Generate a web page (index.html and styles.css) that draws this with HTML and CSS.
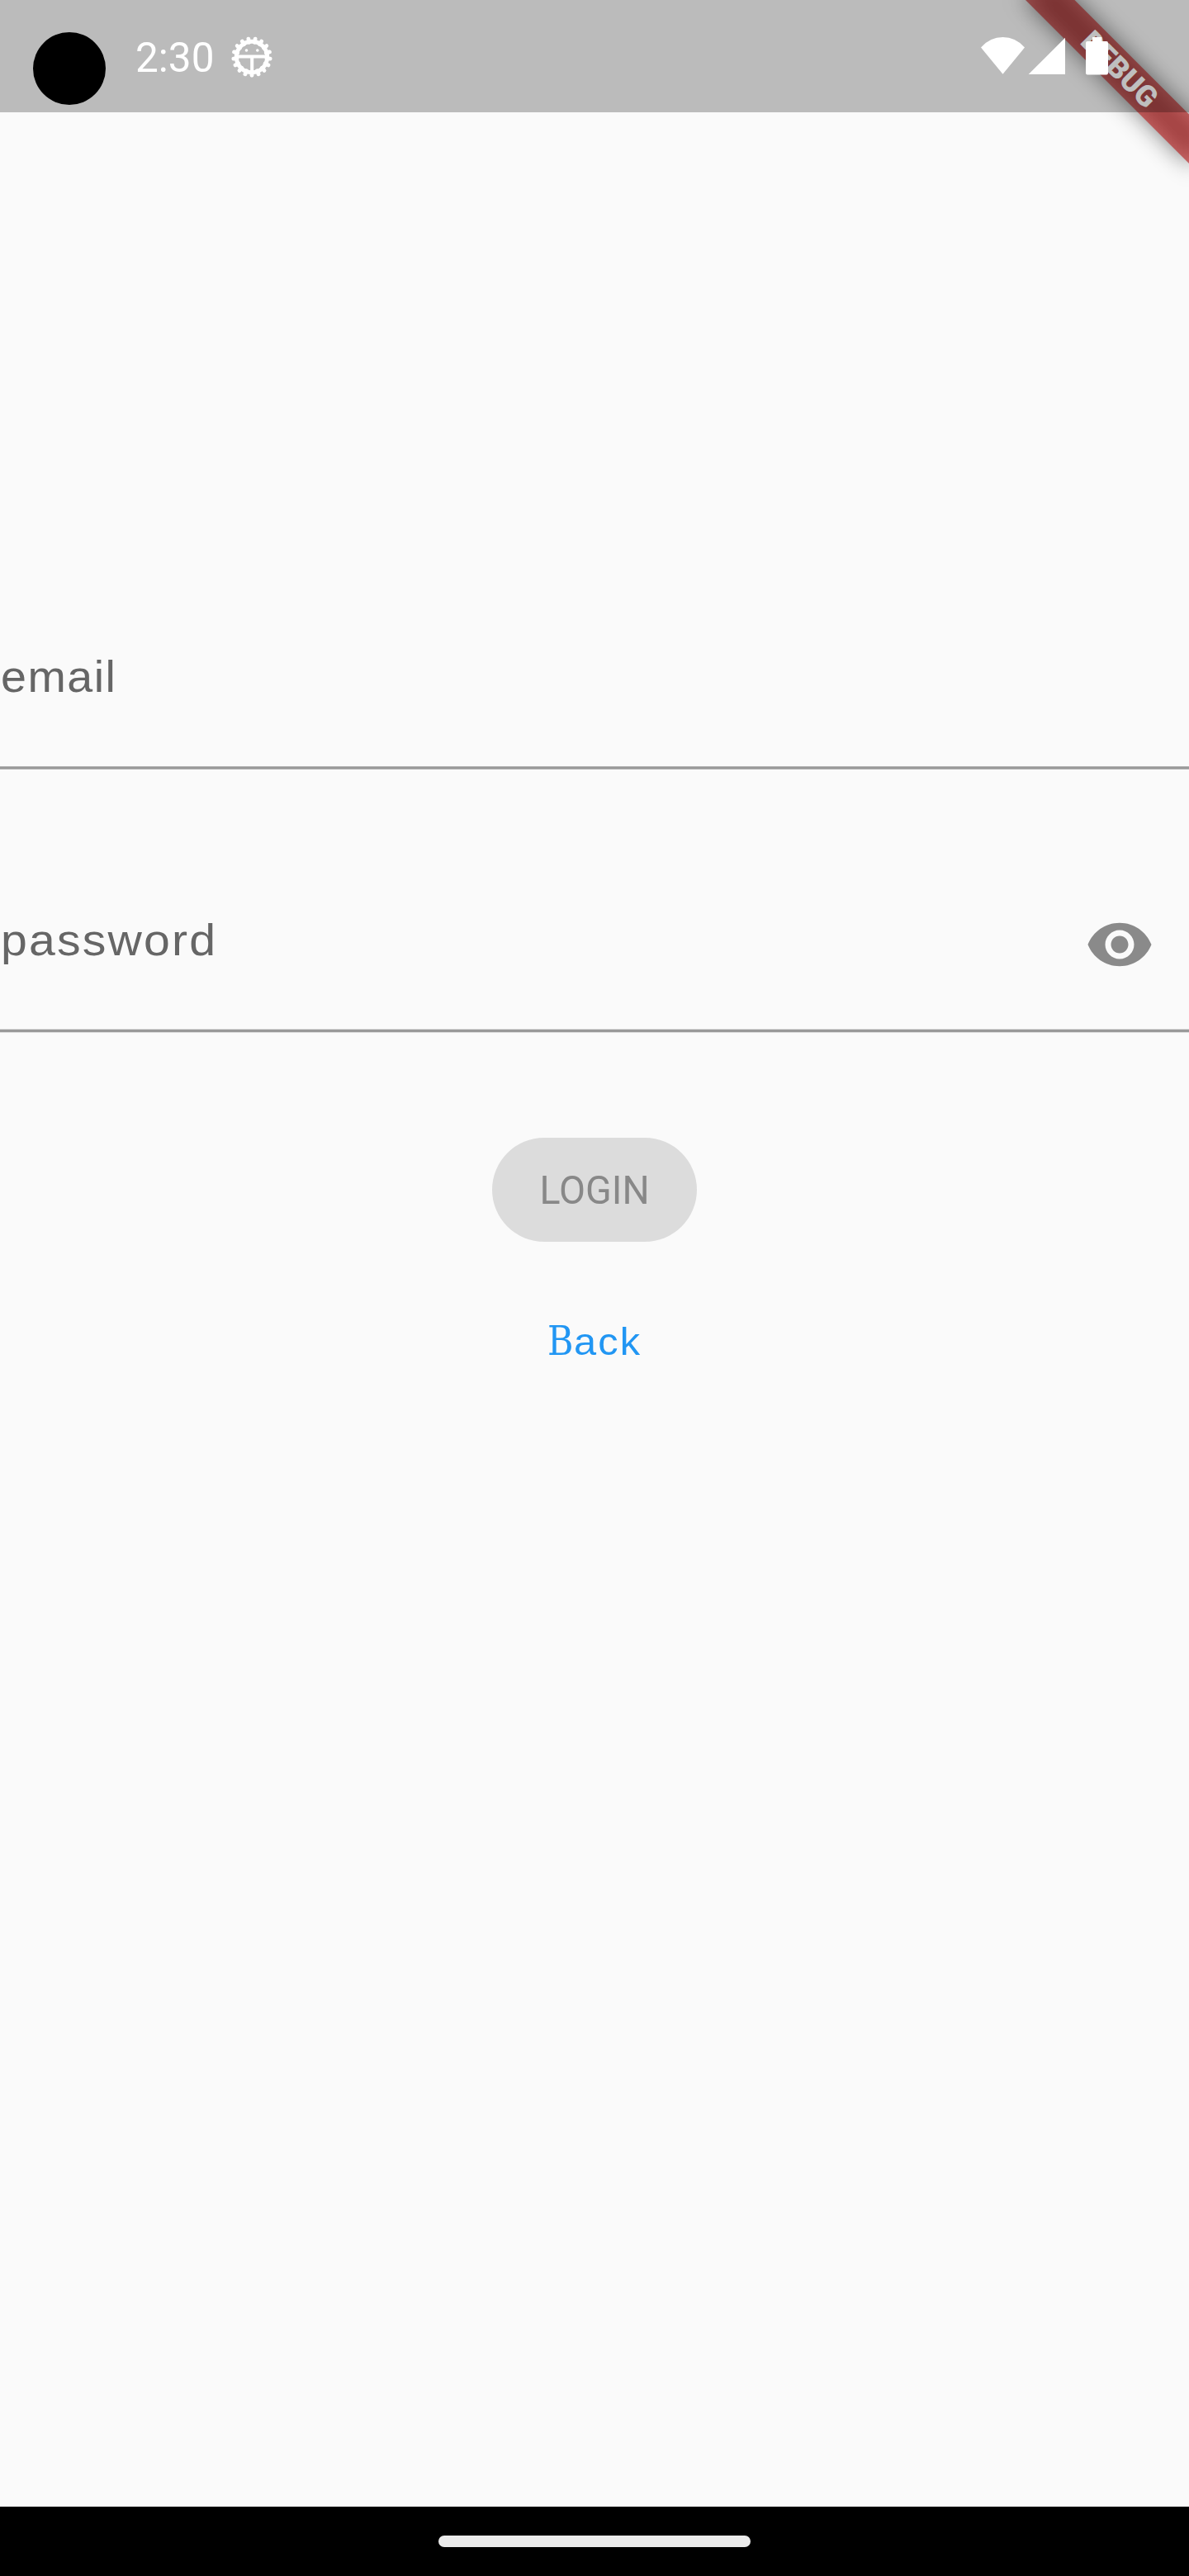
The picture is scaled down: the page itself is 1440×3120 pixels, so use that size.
FILE: index.html
```html
<!DOCTYPE html>
<html lang="en">
<head>
<meta charset="utf-8">
<title>Login</title>
<link rel="stylesheet" href="styles.css">
</head>
<body>
<div class="screen">
  <div class="debug-ribbon"><span>DEBUG</span></div>
  <header class="status-bar">
    <div class="camera"></div>
    <span class="clock">2:30</span>
    <svg class="gear" width="52" height="52" viewBox="-26 -26 52 52" fill="none" stroke="#fff">
      <defs><path id="tooth" d="M0 18V22.3" stroke-width="4.8" stroke-linecap="round"/></defs>
      <circle r="18.7" stroke-width="5"/>
      <use href="#tooth"/><use href="#tooth" transform="rotate(21.18)"/><use href="#tooth" transform="rotate(42.35)"/><use href="#tooth" transform="rotate(63.53)"/><use href="#tooth" transform="rotate(84.71)"/><use href="#tooth" transform="rotate(105.88)"/><use href="#tooth" transform="rotate(127.06)"/><use href="#tooth" transform="rotate(148.24)"/><use href="#tooth" transform="rotate(169.41)"/><use href="#tooth" transform="rotate(190.59)"/><use href="#tooth" transform="rotate(211.76)"/><use href="#tooth" transform="rotate(232.94)"/><use href="#tooth" transform="rotate(254.12)"/><use href="#tooth" transform="rotate(275.29)"/><use href="#tooth" transform="rotate(296.47)"/><use href="#tooth" transform="rotate(317.65)"/><use href="#tooth" transform="rotate(338.82)"/>
      <path d="M-18 -.5H18M.2 0V18" stroke-width="4"/>
      <g fill="#fff" stroke="none"><circle cx="-6.5" cy="-8" r="1.8"/><circle cx="6.8" cy="-8" r="1.8"/></g>
    </svg>
    <svg class="signals" width="160" height="50" viewBox="1186 43 160 50" fill="#fff">
      <path d="M1214.5 89.7L1188 57.4Q1199 45 1214.5 45T1241 57.4Z"/>
      <path d="M1245.7 90L1290 45.7V90Z"/>
      <path d="M1323 45H1334.300V50H1340Q1342 50 1342 52V88.500Q1342 90.500 1340 90.500H1317Q1315 90.500 1315 88.500V52Q1315 50 1317 50H1323Z"/>
    </svg>
  </header>
  <main class="form">
    <label class="field email"><span>email</span></label>
    <label class="field password"><span>password</span>
      <svg width="84" height="84" viewBox="0 0 24 24" fill="#8a8a8a"><path d="M12 4.500C7 4.500 2.730 7.610 1 12c1.730 4.390 6 7.500 11 7.500s9.270-3.110 11-7.500c-1.730-4.390-6-7.500-11-7.500zM12 17c-2.760 0-5-2.240-5-5s2.240-5 5-5 5 2.240 5 5-2.240 5-5 5zm0-8c-1.660 0-3 1.340-3 3s1.340 3 3 3 3-1.340 3-3-1.340-3-3-3z"/></svg>
    </label>
    <button class="login" disabled><span>LOGIN</span></button>
    <a class="back"><span class="slab">B</span><span class="rest">ack</span></a>
  </main>
  <footer class="nav-bar"><div class="handle"></div></footer>
</div>
</body>
</html>
```
FILE: styles.css
```css
* { box-sizing: border-box; }
body { margin: 0; background: #fafafa; }
.screen {
  position: relative;
  width: 1440px;
  height: 3120px;
  display: flex;
  flex-direction: column;
  overflow: hidden;
  font-family: "Liberation Sans", sans-serif;
}

/* status bar: translucent scrim above the ribbon */
.status-bar {
  position: relative;
  z-index: 2;
  height: 136px;
  flex: none;
  display: flex;
  align-items: flex-start;
  background: rgba(0, 0, 0, .25);
  color: #fff;
}
.camera { width: 88px; height: 88px; margin: 39px 0 0 40px; border-radius: 50%; background: #000; }
.clock { width: 95px; margin: 41px 0 0 36px; font: 49.500px/58px Roboto, sans-serif; }
.gear { margin: 42.500px 0 0 20px; }
.signals { margin: 43px 94px 0 auto; }

.debug-ribbon {
  position: absolute;
  z-index: 1;
  left: 1300px;
  top: 98px;
  width: 280px;
  height: 42px;
  transform: rotate(45deg);
  transform-origin: 140px -98px;
  text-align: center;
  color: #fff;
  font: 900 35.700px/42px Roboto, sans-serif;
}
.debug-ribbon::before, .debug-ribbon::after { content: ""; position: absolute; inset: 0; }
.debug-ribbon::before { background: rgba(0, 0, 0, .5); filter: blur(13.900px); }
.debug-ribbon::after { background: rgba(183, 28, 28, .627); }
.debug-ribbon span { position: relative; z-index: 1; }

.form { flex: 1; display: flex; flex-direction: column; align-items: center; }
.field {
  width: 100%;
  display: flex;
  color: #666;
  font-size: 53px;
  line-height: 60px;
}
.field span { height: 60px; transform-origin: left; }
.email {
  height: 168px;
  margin-top: 628px;
  padding-top: 26px;
  background: linear-gradient(#b0b0b0 1px, #999 1px 3px, #b0b0b0 3px) bottom / 100% 4px no-repeat;
}
.email span { letter-spacing: 1.400px; transform: translateX(1px) scaleX(1.05); }
.password {
  height: 168px;
  margin-top: 151px;
  padding-top: 19px;
  justify-content: space-between;
  background: linear-gradient(#ddd 1px, #999 1px 4px, #ddd 4px) bottom / 100% 5px no-repeat;
}
.password span { margin-top: 7px; letter-spacing: 2px; transform: translateX(1px) scaleX(1.08); }
.password svg { margin-right: 42px; }
.login {
  width: 248px;
  height: 126px;
  margin-top: 127px;
  padding: 2px 0 0;
  border: 0;
  border-radius: 63px;
  background: #dcdcdc;
  color: #888;
  font: 49px/58px Roboto, sans-serif;
}
.login span { display: inline-block; transform: scaleX(.95); }
.back {
  display: flex;
  align-items: baseline;
  margin-top: 91px;
  color: #2196f3;
  font-size: 46px;
  line-height: 60px;
}
.slab { width: 32px; font: 47.600px/60px "DejaVu Serif", serif; transform: scaleX(.9); transform-origin: left; }
.rest { letter-spacing: 2px; transform: scaleX(1.06); transform-origin: left; padding-right: 5px; }

.nav-bar { height: 84px; flex: none; padding-top: 35px; background: #000; }
.handle { width: 378px; height: 14px; margin: 0 auto; border-radius: 7px; background: #ebebeb; }
```
